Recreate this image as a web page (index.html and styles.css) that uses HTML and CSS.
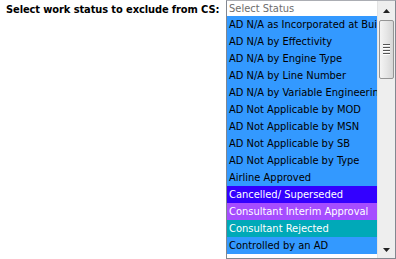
FILE: index.html
```html
<!DOCTYPE html>
<html>
<head>
<meta charset="utf-8">
<link rel="stylesheet" href="styles.css">
</head>
<body>
<div class="wrap">
  <label class="label">Select work status to exclude from CS:</label>
  <div class="listbox">
    <div class="items">
      <div class="opt head">Select Status</div>
      <div class="opt sel">AD N/A as Incorporated at Build</div>
      <div class="opt sel">AD N/A by Effectivity</div>
      <div class="opt sel">AD N/A by Engine Type</div>
      <div class="opt sel">AD N/A by Line Number</div>
      <div class="opt sel">AD N/A by Variable Engineering</div>
      <div class="opt sel">AD Not Applicable by MOD</div>
      <div class="opt sel">AD Not Applicable by MSN</div>
      <div class="opt sel">AD Not Applicable by SB</div>
      <div class="opt sel">AD Not Applicable by Type</div>
      <div class="opt sel">Airline Approved</div>
      <div class="opt cancelled">Cancelled/ Superseded</div>
      <div class="opt interim">Consultant Interim Approval</div>
      <div class="opt rejected">Consultant Rejected</div>
      <div class="opt sel">Controlled by an AD</div>
    </div>
    <div class="scrollbar">
      <div class="arrow up"><svg width="7" height="4" viewBox="0 0 7 4"><path d="M3.5 0 L7 4 L0 4 Z" fill="#222"/></svg></div>
      <div class="thumb">
        <div class="grip"></div><div class="grip"></div><div class="grip"></div><div class="grip"></div>
      </div>
      <div class="track"></div>
      <div class="arrow down"><svg width="7" height="4" viewBox="0 0 7 4"><path d="M0 0 L7 0 L3.5 4 Z" fill="#222"/></svg></div>
    </div>
  </div>
</div>
</body>
</html>
```
FILE: styles.css
```css
html, body {
  margin: 0;
  padding: 0;
  background: #ffffff;
}
.wrap {
  display: flex;
  align-items: flex-start;
  width: 396px;
  height: 259px;
  overflow: hidden;
}
.label {
  width: 220px;
  padding-left: 6px;
  padding-top: 3px;
  font-family: "DejaVu Sans Condensed", "DejaVu Sans", sans-serif;
  font-weight: bold;
  font-size: 11px;
  color: #000;
  white-space: nowrap;
  letter-spacing: -0.1px;
}
.listbox {
  display: flex;
  width: 168px;
  height: 257px;
  border: 1px solid #828790;
  border-top-color: #abadb3;
  background: #fff;
}
.items {
  flex: 1;
  overflow: hidden;
  display: flex;
  flex-direction: column;
}
.opt {
  height: 17px;
  line-height: 17px;
  padding-left: 2px;
  font-family: "DejaVu Sans Condensed", "DejaVu Sans", sans-serif;
  font-size: 11px;
  white-space: nowrap;
  overflow: hidden;
  color: #000;
  flex: none;
}
.opt.head {
  height: 15px;
  line-height: 15px;
  color: #6d6d6d;
  background: #fff;
}
.opt.sel { background: #3399ff; }
.opt.cancelled { background: #3300ff; color: #fff; }
.opt.interim { background: #a64dff; color: #fff; }
.opt.rejected { background: #00a9b8; color: #fff; }
.scrollbar {
  width: 17px;
  flex: none;
  display: flex;
  flex-direction: column;
  background: #eeeeee;
  border-left: 1px solid #e3e3e3;
}
.arrow {
  height: 17px;
  display: flex;
  align-items: center;
  justify-content: center;
  flex: none;
}
.arrow.up { padding-top: 1px; }
.thumb {
  margin: 1px 1px 0 1px;
  height: 57px;
  border: 1px solid #959595;
  border-radius: 2px;
  background: linear-gradient(to right, #f4f4f4, #e6e6e6 50%, #d6d6d6);
  display: flex;
  flex-direction: column;
  align-items: center;
  justify-content: center;
  gap: 1px;
  flex: none;
}
.grip {
  width: 7px;
  height: 1px;
  background: #555;
  border-bottom: 1px solid #fff;
}
.track { flex: 1; }
```
